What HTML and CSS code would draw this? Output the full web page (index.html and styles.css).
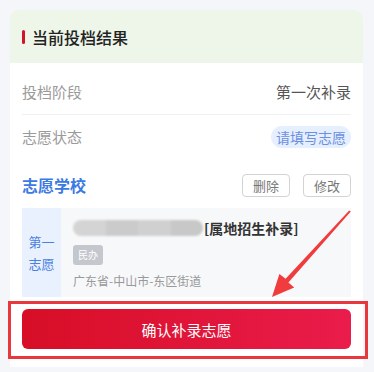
FILE: index.html
```html
<!DOCTYPE html>
<html lang="zh">
<head>
<meta charset="utf-8">
<link rel="stylesheet" href="styles.css">
</head>
<body>
<div class="card">
  <div class="card-header">
    <span class="bar"></span>
    <span class="title">当前投档结果</span>
  </div>
  <div class="card-body">
    <div class="row row-first">
      <span class="label">投档阶段</span>
      <span class="value">第一次补录</span>
    </div>
    <div class="row row-second">
      <span class="label">志愿状态</span>
      <span class="badge">请填写志愿</span>
    </div>
    <div class="section-head">
      <span class="section-title">志愿学校</span>
      <div class="actions">
        <span class="btn-small">删除</span>
        <span class="btn-small">修改</span>
      </div>
    </div>
    <div class="school">
      <div class="school-order">第一<br>志愿</div>
      <div class="school-info">
        <div class="school-name">
          <span class="blur"><i></i><i></i><i></i><i></i></span>
          <span class="name-text">[属地招生补录]</span>
        </div>
        <span class="tag">民办</span>
        <div class="addr">广东省-中山市-东区街道</div>
      </div>
    </div>
  </div>
</div>
<div class="footer">
  <div class="confirm">确认补录志愿</div>
</div>
<div class="highlight"></div>
<svg class="arrow" width="374" height="372" viewBox="0 0 374 372">
  <polygon points="350.8,211.6 349.2,210.4 285.6,278.7 279.4,274.0 272,297 294.2,287.4 288.4,282.6" fill="#f03c3c"/>
</svg>
</body>
</html>
```

FILE: styles.css
```css
* { box-sizing: border-box; }
html, body { margin: 0; padding: 0; }
body {
  width: 374px;
  height: 372px;
  overflow: hidden;
  background: #f4f6f9;
  font-family: "Noto Sans CJK SC", "Noto Sans", sans-serif;
  padding: 10px 11px 0 10px;
  position: relative;
}
.card {
  background: #fff;
  border-radius: 8px 8px 0 0;
  height: 357px;
  overflow: hidden;
}
.card-header {
  height: 53px;
  background: #eef6ea;
  display: flex;
  align-items: center;
  padding-left: 12px;
}
.bar {
  width: 3px;
  height: 14px;
  background: #d3122c;
  border-radius: 2px;
  margin-right: 7px;
}
.title {
  font-size: 16px;
  font-weight: 500;
  color: #222;
  line-height: 20px;
}
.card-body {
  padding: 0 12px;
}
.row {
  display: flex;
  justify-content: space-between;
  align-items: center;
}
.row-first {
  padding: 19px 0 12px;
  border-bottom: 1px solid #f0f1f3;
}
.row-second {
  padding: 11px 0 0;
}
.label {
  font-size: 15px;
  color: #9a9a9a;
  line-height: 20px;
}
.value {
  font-size: 15px;
  color: #555;
  line-height: 20px;
}
.badge {
  font-size: 14px;
  color: #6c8fe0;
  background: #e6efff;
  border-radius: 11px;
  height: 22px;
  line-height: 22px;
  padding: 0 5px;
}
.section-head {
  display: flex;
  justify-content: space-between;
  align-items: center;
  margin-top: 25px;
}
.section-title {
  font-size: 16px;
  font-weight: 700;
  color: #3b7ae3;
}
.actions {
  display: flex;
  gap: 13px;
}
.btn-small {
  width: 48px;
  height: 23px;
  border: 1px solid #d3d3d3;
  border-radius: 4px;
  font-size: 13px;
  color: #777;
  display: flex;
  align-items: center;
  justify-content: center;
}
.school {
  margin-top: 11px;
  display: flex;
  background: #f7f8fa;
  height: 100px;
}
.school-order {
  width: 39px;
  background: #e8f1fd;
  color: #4a80e2;
  font-size: 13px;
  line-height: 22px;
  display: flex;
  align-items: center;
  justify-content: center;
  text-align: center;
  padding-bottom: 10px;
}
.school-info {
  padding: 11px 0 0 12px;
}
.school-name {
  display: flex;
  align-items: center;
  height: 18px;
}
.blur {
  display: flex;
  width: 130px;
  height: 16px;
  border-radius: 8px;
  overflow: hidden;
  filter: blur(1px);
  margin-right: 1px;
}
.blur i {
  flex: 1;
  background: #d4d4d4;
}
.blur i:nth-child(2) { background: #cbcbcb; }
.blur i:nth-child(3) { background: #d0d0d0; }
.blur i:nth-child(4) { background: #c8c8c8; }
.name-text {
  font-size: 14px;
  font-weight: 700;
  color: #333;
}
.tag {
  display: inline-block;
  margin-top: 8px;
  background: #c4c7cd;
  color: #fff;
  font-size: 10px;
  width: 30px;
  height: 20px;
  line-height: 20px;
  text-align: center;
  border-radius: 3px;
}
.addr {
  margin-top: 7px;
  font-size: 12px;
  color: #999;
  line-height: 18px;
}
.footer {
  position: absolute;
  left: 10px;
  top: 297px;
  width: 353px;
  height: 70px;
  background: #fff;
  padding: 12px 12px 0 12px;
}
.confirm {
  height: 40px;
  border-radius: 6px;
  background: linear-gradient(90deg, #d70e26, #e91c4b);
  color: #fff;
  font-size: 15px;
  display: flex;
  align-items: center;
  justify-content: center;
}
.highlight {
  position: absolute;
  left: 8px;
  top: 301px;
  width: 360px;
  height: 58px;
  border: 3px solid #e8383d;
}
.arrow {
  position: absolute;
  left: 0;
  top: 0;
}
```
